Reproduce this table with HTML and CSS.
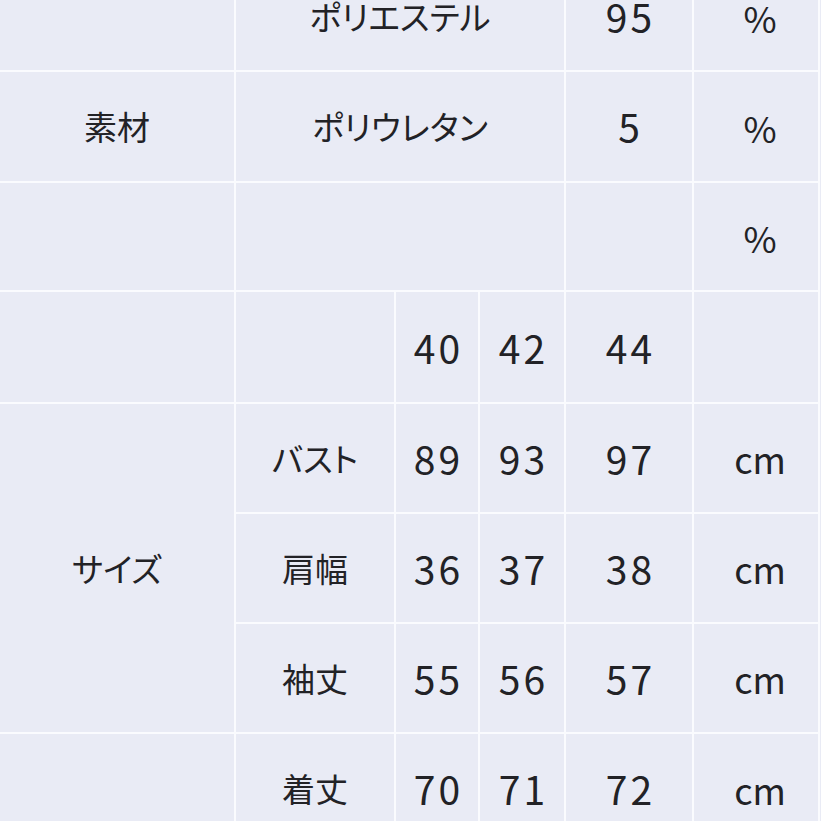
FILE: index.html
```html
<!DOCTYPE html>
<html lang="ja">
<head>
<meta charset="utf-8">
<link rel="stylesheet" href="styles.css">
</head>
<body>
<div class="sheet">
  <div class="cell"></div>
  <div class="cell span3">ポリエステル</div>
  <div class="cell num">95</div>
  <div class="cell unit">%</div>

  <div class="cell">素材</div>
  <div class="cell span3">ポリウレタン</div>
  <div class="cell num">5</div>
  <div class="cell unit">%</div>

  <div class="cell"></div>
  <div class="cell span3"></div>
  <div class="cell num"></div>
  <div class="cell unit">%</div>

  <div class="cell"></div>
  <div class="cell"></div>
  <div class="cell num">40</div>
  <div class="cell num">42</div>
  <div class="cell num">44</div>
  <div class="cell unit"></div>

  <div class="cell rows3">サイズ</div>
  <div class="cell">バスト</div>
  <div class="cell num">89</div>
  <div class="cell num">93</div>
  <div class="cell num">97</div>
  <div class="cell unit">cm</div>

  <div class="cell">肩幅</div>
  <div class="cell num">36</div>
  <div class="cell num">37</div>
  <div class="cell num">38</div>
  <div class="cell unit">cm</div>

  <div class="cell">袖丈</div>
  <div class="cell num">55</div>
  <div class="cell num">56</div>
  <div class="cell num">57</div>
  <div class="cell unit">cm</div>

  <div class="cell"></div>
  <div class="cell">着丈</div>
  <div class="cell num">70</div>
  <div class="cell num">71</div>
  <div class="cell num">72</div>
  <div class="cell unit">cm</div>
</div>
</body>
</html>
```
FILE: styles.css
```css
html, body {
  margin: 0;
  padding: 0;
  background: #e9ebf5;
  overflow: hidden;
}
body {
  width: 821px;
  height: 821px;
}
.sheet {
  margin-top: -37px;
  display: grid;
  grid-template-columns: 234px 158px 82px 84px 126px 124px;
  grid-template-rows: 107px 109px 107px 110px 108px 108px 108px 109px;
  gap: 2px;
  width: 820px;
  box-sizing: border-box;
  padding-right: 2px;
  background: #fafbfe;
  font-family: "Noto Sans CJK JP", "Noto Sans", sans-serif;
  font-size: 33px;
  font-feature-settings: "palt";
  color: #222226;
}
.cell {
  background: #e9ebf5;
  display: flex;
  align-items: center;
  justify-content: center;
  line-height: 1;
}
.span3 {
  grid-column: span 3;
}
.rows3 {
  grid-row: span 3;
}
.num {
  font-size: 39px;
  letter-spacing: 3px;
  text-indent: 3px;
}
.unit {
  font-size: 36px;
  padding-left: 8px;
}
```
